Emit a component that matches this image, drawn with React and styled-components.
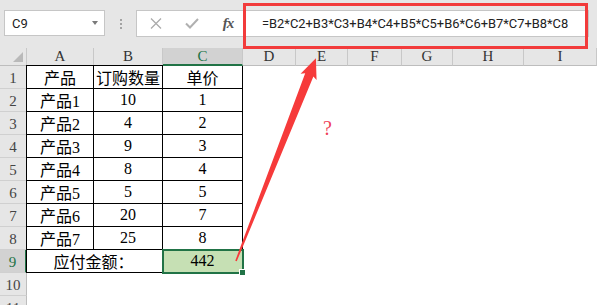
import React from 'react';
import styled, { createGlobalStyle, css } from 'styled-components';

const GlobalStyle = createGlobalStyle`
  *, *::before, *::after { box-sizing: border-box; }
  html, body { margin: 0; padding: 0; background: #fff; overflow: hidden; }
`;

const GREEN = '#217346';
const SERIF = `"Liberation Serif", "Noto Sans CJK SC", serif`;

const Page = styled.div`
  position: relative;
  width: 597px;
  height: 305px;
  overflow: hidden;
  background: #fff;
`;

const TopBar = styled.div`
  position: relative;
  height: 48px;
  background: #e6e6e6;
  display: flex;
  align-items: flex-start;
  padding: 10px 8px 0 4px;
`;

const NameBox = styled.div`
  flex: 0 0 101px;
  height: 26px;
  background: #fff;
  border: 1px solid #c6c6c6;
  display: flex;
  align-items: center;
  justify-content: space-between;
  padding: 0 6px 0 7px;
  font-family: Roboto, "Liberation Sans", sans-serif;
  font-size: 13px;
  color: #222;
`;

const Caret = styled.span`
  width: 0;
  height: 0;
  border-left: 3.5px solid transparent;
  border-right: 3.5px solid transparent;
  border-top: 4px solid #7a7a7a;
`;

const Grip = styled.div`
  flex: 0 0 31px;
  height: 27px;
  display: flex;
  flex-direction: column;
  align-items: center;
  justify-content: center;
  gap: 2px;

  i {
    display: block;
    width: 2px;
    height: 2px;
    background: #a3a3a3;
  }
`;

const FormulaBar = styled.div`
  flex: 1;
  min-width: 0;
  height: 27px;
  background: #fff;
  border: 1px solid #c6c6c6;
  display: flex;
  align-items: center;
  overflow: hidden;
`;

const ToolButton = styled.div`
  flex: 0 0 36px;
  height: 100%;
  display: flex;
  align-items: center;
  justify-content: center;
`;

const FxLabel = styled.span`
  font-family: "Liberation Serif", serif;
  font-style: italic;
  font-weight: bold;
  font-size: 15px;
  color: #555;
  letter-spacing: -1px;
`;

const FormulaText = styled.div`
  flex: 0 0 auto;
  padding-left: 16px;
  font-family: Roboto, "Liberation Sans", sans-serif;
  font-size: 12.9px;
  color: #222;
  white-space: nowrap;
`;

const Highlight = styled.div`
  position: absolute;
  left: 243px;
  top: 3px;
  width: 345px;
  height: 46px;
  border: 3.5px solid #f23b3b;
  pointer-events: none;
`;

const Sheet = styled.div`
  display: grid;
  grid-template-columns: 27px 67px 69px 80px 53px 52px 54px 51px 71px 1fr;
  grid-template-rows: 18px;
  grid-auto-rows: 23px;
  font-family: ${SERIF};
`;

const Corner = styled.div`
  position: relative;
  background: #e6e6e6;
  border-right: 1px solid #c8c8c8;
  border-bottom: 1px solid #bdbdbd;

  &::after {
    content: '';
    position: absolute;
    right: 3px;
    bottom: 3px;
    width: 0;
    height: 0;
    border-left: 10px solid transparent;
    border-bottom: 10px solid #b9b9b9;
  }
`;

const ColHead = styled.div`
  background: ${(p) => (p.$active ? '#d2d2d2' : '#e6e6e6')};
  color: ${(p) => (p.$active ? GREEN : '#333')};
  border-right: 1px solid #c8c8c8;
  border-bottom: ${(p) => (p.$active ? `2px solid ${GREEN}` : '1px solid #bdbdbd')};
  font-size: 15px;
  display: flex;
  align-items: center;
  justify-content: center;
  line-height: 1;
`;

const RowHead = styled.div`
  background: ${(p) => (p.$active ? '#d2d2d2' : '#e6e6e6')};
  color: ${(p) => (p.$active ? GREEN : '#444')};
  border-right: ${(p) => (p.$active ? `2px solid ${GREEN}` : '1px solid #bdbdbd')};
  border-bottom: 1px solid #d0d0d0;
  font-size: 15px;
  display: flex;
  align-items: center;
  justify-content: center;
  padding-top: 2px;
`;

const Cell = styled.div`
  position: relative;
  display: flex;
  align-items: center;
  justify-content: center;
  font-size: 16px;
  color: #000;
  white-space: nowrap;
  ${(p) =>
    p.$table &&
    css`
      border-right: 1px solid #000;
      border-bottom: 1px solid #000;
    `}
  ${(p) =>
    p.$first &&
    css`
      margin-left: -1px;
      border-left: 1px solid #000;
    `}
  ${(p) =>
    p.$top &&
    css`
      margin-top: -1px;
      border-top: 1px solid #000;
    `}
  ${(p) => p.$span && css`grid-column: span ${p.$span};`}
  ${(p) => p.$fill && css`background: ${p.$fill};`}
`;

const Selection = styled.div`
  position: absolute;
  inset: -1px -2px -2px -1px;
  border: 2px solid ${GREEN};
  pointer-events: none;
`;

const FillHandle = styled.div`
  position: absolute;
  right: -4px;
  bottom: -4px;
  width: 7px;
  height: 7px;
  background: ${GREEN};
  border: 1px solid #fff;
`;

const Overlay = styled.svg`
  position: absolute;
  left: 0;
  top: 0;
  pointer-events: none;
`;

const columns = ['A', 'B', 'C', 'D', 'E', 'F', 'G', 'H', 'I'];

const rows = [
  ['产品', '订购数量', '单价'],
  ['产品1', '10', '1'],
  ['产品2', '4', '2'],
  ['产品3', '9', '3'],
  ['产品4', '8', '4'],
  ['产品5', '5', '5'],
  ['产品6', '20', '7'],
  ['产品7', '25', '8'],
];

const formula = '=B2*C2+B3*C3+B4*C4+B5*C5+B6*C6+B7*C7+B8*C8';

const Blank = () => columns.slice(3).map((c) => <Cell key={c} />);

const App = () => {
  return (
    <Page>
      <GlobalStyle />
      <TopBar>
        <NameBox>
          <span>C9</span>
          <Caret />
        </NameBox>
        <Grip>
          <i />
          <i />
          <i />
        </Grip>
        <FormulaBar>
          <ToolButton style={{ marginLeft: 1 }}>
            <svg width="12" height="11" viewBox="0 0 12 11">
              <path d="M1 0.5 L11 10.5 M11 0.5 L1 10.5" stroke="#ababab" strokeWidth="1.3" fill="none" />
            </svg>
          </ToolButton>
          <ToolButton>
            <svg width="14" height="11" viewBox="0 0 14 11">
              <path d="M1 5.5 L5 9.5 L13 1" stroke="#b0b0b0" strokeWidth="2" fill="none" />
            </svg>
          </ToolButton>
          <ToolButton>
            <FxLabel>fx</FxLabel>
          </ToolButton>
          <FormulaText>{formula}</FormulaText>
        </FormulaBar>
        <Highlight />
      </TopBar>

      <Sheet>
        <Corner />
        {columns.map((c) => (
          <ColHead key={c} $active={c === 'C'}>
            {c}
          </ColHead>
        ))}

        {rows.map((r, i) => (
          <React.Fragment key={i}>
            <RowHead>{i + 1}</RowHead>
            <Cell $table $first $top={i === 0}>{r[0]}</Cell>
            <Cell $table $top={i === 0}>{r[1]}</Cell>
            <Cell $table>{r[2]}</Cell>
            <Blank />
          </React.Fragment>
        ))}

        <RowHead $active>9</RowHead>
        <Cell $table $first $span={2} style={{ paddingRight: 2 }}>
          应付金额：
        </Cell>
        <Cell $table $fill="#c6e0b4">
          442
          <Selection />
          <FillHandle />
        </Cell>
        <Blank />

        <RowHead>10</RowHead>
        <Cell />
        <Cell />
        <Cell />
        <Blank />

        <RowHead>11</RowHead>
        <Cell />
        <Cell />
        <Cell />
        <Blank />
      </Sheet>

      <Overlay width="597" height="305" viewBox="0 0 597 305">
        <g transform="translate(236 261) rotate(-68.5)">
          <polygon
            points="0,-0.8 200,-4.4 198,-8.6 218,0 198,8.6 200,4.4 0,0.8"
            fill="#f63a3a"
          />
        </g>
        <text
          x="327.5"
          y="135"
          textAnchor="middle"
          fontFamily="Liberation Serif, serif"
          fontSize="20"
          fill="#ef3f58"
        >
          ?
        </text>
      </Overlay>
    </Page>
  );
};

export default App;
